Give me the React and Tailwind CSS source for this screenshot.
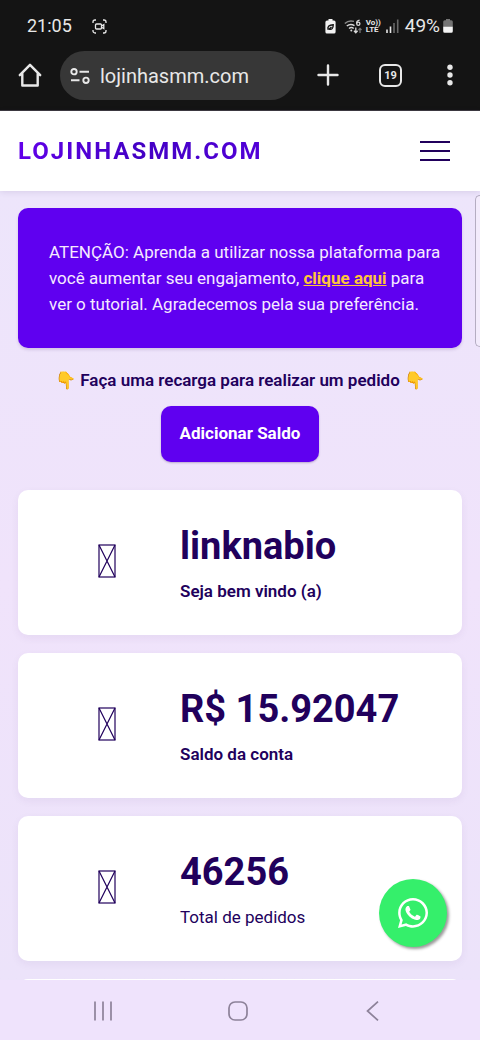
import React from "react";

function StatusBar() {
  return (
    <div className="flex h-[50px] items-center justify-between pl-[27px] pr-[27px] text-[#e8e8e8]">
      <div className="flex items-center gap-5">
        <span className="text-lg">21:05</span>
        <svg width="15" height="15" viewBox="0 0 15 15" fill="none" stroke="currentColor" strokeWidth="1.3" aria-hidden="true">
          <path d="M1 4V3a2 2 0 0 1 2-2h1M11 1h1a2 2 0 0 1 2 2v1M14 11v1a2 2 0 0 1-2 2h-1M4 14H3a2 2 0 0 1-2-2v-1" />
          <rect x="3.500" y="5" width="6" height="5" rx="1" />
          <path d="M9.500 7l2.300-1.400v4L9.500 8.200" />
        </svg>
      </div>
      <div className="flex items-center">
        <svg width="11" height="15" viewBox="0 0 11 15" aria-hidden="true">
          <path d="M3.500 0h4v1.500H9A1.700 1.700 0 0 1 10.600 3v10A1.700 1.700 0 0 1 9 14.600H2A1.700 1.700 0 0 1 .4 13V3A1.700 1.700 0 0 1 2 1.500h1.500z" fill="#f2f2f2" />
          <path d="M3 10.500c-.6-3 1-4.500 5.200-4.800.1 3.600-1.400 5.300-4.200 4.500L6.500 8" fill="none" stroke="#141414" strokeWidth="1.400" />
        </svg>
        <svg className="ml-2" width="18" height="15" viewBox="0 0 18 15" fill="none" stroke="#d8d8d8" strokeWidth="1.500" aria-hidden="true">
          <path d="M.8 4.500C3.500 2 7 1.500 10 2.400" stroke="#8a8a8a" />
          <path d="M2.800 7C5 5.200 8 5 10.500 6.600M5 9.500c1.400-1.100 3.400-1.100 4.700 0" />
          <circle cx="7.300" cy="11.600" r="1" fill="#d8d8d8" stroke="none" />
          <path d="M15.600 1.200c-2 .2-3 1.400-3 3.200" strokeWidth="1.300" />
          <circle cx="14.300" cy="4.800" r="1.600" strokeWidth="1.300" />
          <path d="M11.800 8.500v5M10 11.800l1.800 2 1.800-2" strokeWidth="1.300" />
          <path d="M16 14V9.500M14.500 11L16 9.300l1.500 1.700" stroke="#777" strokeWidth="1.200" />
        </svg>
        <span className="ml-1 flex w-[15px] flex-col text-[8px] font-bold leading-[7px]">
          <span>Vo))</span>
          <span>LTE</span>
        </span>
        <svg className="ml-[5px] mr-[6px]" width="13" height="14" viewBox="0 0 13 14" aria-hidden="true">
          <path d="M.2 10.500h1.600V14H.2zM3.700 7.500h1.600V14H3.700z" fill="#e8e8e8" />
          <path d="M7.200 4h1.600v10H7.200zM10.900.5h1.600V14h-1.600z" fill="#686868" />
        </svg>
        <span className="text-[19px]">49%</span>
        <svg className="ml-[3px]" width="10" height="14" viewBox="0 0 10 14" aria-hidden="true">
          <path d="M3 0h4v1.200h1.300A1.500 1.500 0 0 1 9.800 2.700V8H.2V2.700a1.500 1.500 0 0 1 1.500-1.500H3z" fill="#747474" />
          <path d="M.2 7.800h9.600v4.500a1.500 1.500 0 0 1-1.500 1.500H1.700a1.500 1.500 0 0 1-1.500-1.500z" fill="#f4f4f4" />
        </svg>
      </div>
    </div>
  );
}

function BrowserBar() {
  return (
    <div className="flex h-[60px] items-start border-b border-[#3c3a40] pl-[18px] pr-5 text-[#e8e8e8]">
      <button type="button" aria-label="Página inicial" className="flex h-12 w-6 items-center justify-center">
        <svg width="24" height="24" viewBox="0 0 24 24" fill="none" stroke="currentColor" strokeWidth="2.400" strokeLinejoin="round" strokeLinecap="round">
          <path d="M1.800 12.200L12 1.800l10.200 10.400M4.300 10.500v12h15.400v-12" />
        </svg>
      </button>
      <button type="button" className="ml-[18px] flex h-[49px] flex-1 items-center gap-[10px] rounded-full bg-[#373737] px-[10px]">
        <svg width="20" height="16" viewBox="0 0 20 16" fill="none" stroke="currentColor" strokeWidth="1.900" aria-hidden="true">
          <circle cx="4" cy="3.700" r="2.700" />
          <path d="M9.500 3.700H19M1 12.300h8.500" />
          <circle cx="16" cy="12.300" r="2.700" />
        </svg>
        <span className="text-xl">lojinhasmm.com</span>
      </button>
      <button type="button" aria-label="Nova guia" className="ml-[22px] flex h-12 w-[22px] items-center justify-center">
        <svg width="22" height="22" viewBox="0 0 22 22" stroke="currentColor" strokeWidth="2.400" strokeLinecap="round">
          <path d="M11 1.500v19M1.500 11h19" />
        </svg>
      </button>
      <div className="ml-10 flex h-12 items-center">
        <button type="button" aria-label="19 guias" className="flex h-[23px] w-[23px] items-center justify-center rounded-md border-2 border-[#e8e8e8] text-[11px] font-bold leading-none">
          19
        </button>
      </div>
      <button type="button" aria-label="Mais opções" className="ml-[38px] flex h-12 w-5 items-center justify-center">
        <svg width="6" height="22" viewBox="0 0 6 22" fill="currentColor">
          <circle cx="3" cy="3.200" r="2.700" />
          <circle cx="3" cy="11" r="2.700" />
          <circle cx="3" cy="18.800" r="2.700" />
        </svg>
      </button>
    </div>
  );
}

function SiteHeader() {
  return (
    <header className="relative z-10 flex h-20 shrink-0 items-center justify-between bg-white pl-[18px] pr-[30px] shadow-[0_1px_6px_rgba(60,30,100,0.12)]">
      <a href="#inicio" className="bg-linear-to-r from-[#6200ea] via-[#4300c4] to-[#5200d8] bg-clip-text text-2xl font-bold tracking-[2px] text-transparent">
        LOJINHASMM.COM
      </a>
      <button type="button" aria-label="Abrir menu" className="flex w-[30px] flex-col gap-[7px]">
        <span className="h-[2px] bg-[#21005c]" />
        <span className="h-[2px] bg-[#21005c]" />
        <span className="h-[2px] bg-[#21005c]" />
      </button>
    </header>
  );
}

function StatCard({ value, label, strong }) {
  return (
    <article className="grid h-[145px] shrink-0 grid-cols-[162px_1fr] items-center rounded-[10px] bg-white shadow-[0_3px_8px_rgba(60,30,100,0.06)]">
      <svg className="mb-1 ml-20" width="18" height="34" viewBox="0 0 18 34" fill="none" stroke="#21005c" strokeWidth="1.200" aria-hidden="true">
        <rect x="1" y="1" width="16" height="32" />
        <path d="M1 1l16 32M17 1L1 33" />
      </svg>
      <div>
        <h2 className="text-[38px] font-bold leading-[48px]">{value}</h2>
        <p className={strong ? "mt-2 text-[17px] font-semibold leading-[26px]" : "mt-2 text-[17px] leading-[26px]"}>{label}</p>
      </div>
    </article>
  );
}

function WhatsAppButton() {
  return (
    <a
      href="#whatsapp"
      aria-label="WhatsApp"
      className="absolute bottom-[33px] right-[33px] flex h-[68px] w-[68px] items-center justify-center rounded-full bg-[#35ef6b] text-white shadow-[2px_2px_3px_#999]"
    >
      <svg width="30" height="30" viewBox="0 32 448 448" fill="currentColor" aria-hidden="true">
        <path d="M380.900 97.100C339 55.100 283.200 32 223.900 32c-122.400 0-222 99.600-222 222 0 39.100 10.200 77.300 29.600 111L0 480l117.700-30.900c32.400 17.700 68.900 27 106.100 27h.1c122.300 0 224.100-99.600 224.100-222 0-59.300-25.200-115-67.100-157zm-157 341.600c-33.200 0-65.700-8.900-94-25.700l-6.700-4-69.800 18.300L72 359.200l-4.400-7c-18.500-29.400-28.200-63.300-28.200-98.200 0-101.700 82.800-184.500 184.600-184.500 49.300 0 95.600 19.200 130.400 54.100 34.800 34.900 56.200 81.200 56.100 130.500 0 101.800-84.900 184.600-186.600 184.600zm101.200-138.200c-5.500-2.800-32.800-16.200-37.900-18-5.100-1.900-8.800-2.800-12.500 2.800-3.700 5.600-14.300 18-17.600 21.800-3.200 3.700-6.500 4.200-12 1.400-32.600-16.300-54-29.100-75.500-66-5.700-9.800 5.700-9.100 16.300-30.300 1.800-3.700.9-6.900-.5-9.700-1.400-2.800-12.500-30.100-17.100-41.200-4.500-10.800-9.100-9.300-12.500-9.500-3.200-.2-6.900-.2-10.600-.2-3.700 0-9.700 1.400-14.800 6.900-5.100 5.600-19.400 19-19.400 46.300 0 27.300 19.900 53.700 22.600 57.400 2.800 3.700 39.100 59.700 94.800 83.800 35.200 15.200 49 16.500 66.600 13.900 10.700-1.600 32.800-13.400 37.400-26.400 4.600-13 4.600-24.100 3.200-26.400-1.300-2.500-5-3.900-10.500-6.600z" />
      </svg>
    </a>
  );
}

function SystemNav() {
  return (
    <nav aria-label="Sistema" className="flex h-[60px] shrink-0 items-center justify-around bg-[#efe3fc] pl-9 pr-10 pt-[2px] text-[#8d8299]">
      <button type="button" aria-label="Recentes">
        <svg width="20" height="20" viewBox="0 0 20 20" stroke="currentColor" strokeWidth="1.700">
          <path d="M2 .5v19M10 .5v19M18 .5v19" />
        </svg>
      </button>
      <button type="button" aria-label="Início">
        <svg width="20" height="20" viewBox="0 0 20 20" fill="none" stroke="currentColor" strokeWidth="1.700">
          <rect x="1" y="1" width="18" height="18" rx="6" />
        </svg>
      </button>
      <button type="button" aria-label="Voltar">
        <svg width="20" height="20" viewBox="0 0 20 20" fill="none" stroke="currentColor" strokeWidth="1.700">
          <path d="M15 .6L4.500 10 15 19.400" />
        </svg>
      </button>
    </nav>
  );
}

export default function App() {
  return (
    <div className="flex h-screen flex-col bg-[#efe3fc] font-['Roboto',sans-serif] text-[#21005c]">
      <div className="shrink-0 bg-[#141414] pt-px">
        <StatusBar />
        <BrowserBar />
      </div>
      <SiteHeader />
      <div className="relative min-h-0 flex-1">
        <main className="flex h-full flex-col overflow-hidden bg-linear-to-b from-[#ede5fb] via-[#f0e3fb] to-[#ece3fa] px-[18px] pt-[17px]">
          <section className="shrink-0 rounded-[10px] bg-[#5f00f0] p-[31px] pr-5 text-[17px] leading-[26px] text-[#f6eaff] shadow-[0_2px_3px_rgba(60,30,100,0.15)]">
            <p>
              ATENÇÃO: Aprenda a utilizar nossa plataforma para você aumentar seu engajamento,{" "}
              <a href="#tutorial" className="font-bold text-[#ffc53a] underline">clique aqui</a> para ver o tutorial. Agradecemos pela sua preferência.
            </p>
          </section>
          <p className="mt-[19px] shrink-0 whitespace-nowrap text-center text-[17px] font-semibold leading-[26px]">
            👇 Faça uma recarga para realizar um pedido 👇
          </p>
          <button type="button" className="mb-7 mt-[13px] h-14 shrink-0 self-center rounded-[10px] bg-[#5f00f0] px-[19px] text-[17px] font-bold text-white shadow-[0_1px_2px_rgba(60,30,100,0.3)]">
            Adicionar Saldo
          </button>
          <div className="flex flex-col gap-[18px]">
            <StatCard value="linknabio" label="Seja bem vindo (a)" strong />
            <StatCard value="R$ 15.92047" label="Saldo da conta" strong />
            <StatCard value="46256" label="Total de pedidos" />
            <div className="h-[145px] shrink-0 rounded-[10px] bg-white" />
          </div>
        </main>
        <div className="absolute right-0 top-1 h-[152px] w-[5px] rounded-l-md border border-r-0 border-[#b5adc2] bg-[#f3ebfc]" />
        <WhatsAppButton />
      </div>
      <SystemNav />
    </div>
  );
}
